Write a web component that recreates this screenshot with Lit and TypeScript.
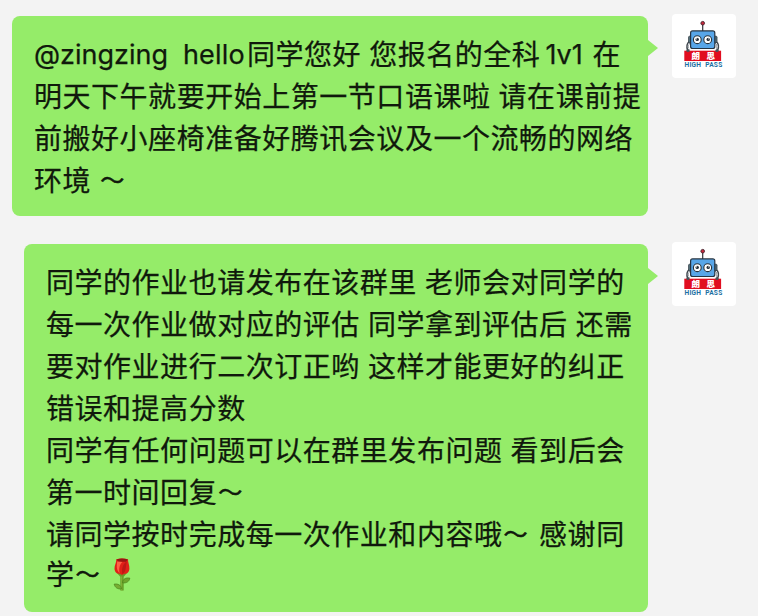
import { LitElement, html, css, svg } from "lit";
import { customElement, property } from "lit/decorators.js";

@customElement("robot-avatar")
export class RobotAvatar extends LitElement {
  static styles = css`
    :host {
      display: block;
      width: 64px;
      height: 64px;
      border-radius: 4px;
      background: #fff;
      overflow: hidden;
    }
    svg {
      display: block;
    }
    .name {
      font: 900 8.5px "Noto Sans CJK SC", sans-serif;
      fill: #fff;
    }
    .brand {
      font: 700 6.6px Roboto, "Liberation Sans", sans-serif;
      fill: #1b6fa3;
    }
  `;

  render() {
    return html`<svg width="64" height="64" viewBox="0 0 64 64">
      <path d="M30.7 10V17" stroke="#33343b" stroke-width="1.2" />
      <circle cx="30.7" cy="9.2" r="1.8" fill="#c8283c" stroke="#45232d" stroke-width=".9" />
      <path d="M17.5 28C15.2 30 15 33 16.2 36.5M43.8 28C46.4 30 46.4 33 45 36.5" fill="none" stroke="#41474e" stroke-width="2.6" />
      <path d="M17.5 28.5C15.9 30.5 15.8 33 16.7 35.5M43.8 28.5C45.7 30.5 45.7 33 44.6 35.5" fill="none" stroke="#e4e9ec" stroke-width="1" />
      <rect x="16.6" y="22.2" width="3" height="6.4" rx="1" fill="#58737c" stroke="#2d3a42" stroke-width=".8" />
      <rect x="42" y="22.2" width="3" height="6.4" rx="1" fill="#58737c" stroke="#2d3a42" stroke-width=".8" />
      <rect x="18.6" y="16.9" width="24.2" height="17.6" rx="2" fill="#58a6e8" stroke="#263442" stroke-width="1.2" />
      ${[25.3, 35.7].map(
        (x, i) => svg`
          <circle cx=${x} cy="25.7" r="3.9" fill="#fff" stroke="#26333d" stroke-width="1.1" />
          <circle cx=${i ? x + 0.5 : x - 0.1} cy="25.4" r="1.7" fill="#26303a" />
          <circle cx=${i ? x + 1.1 : x - 0.7} cy="24.8" r=".6" fill="#fff" />`
      )}
      <rect x="12.3" y="36.7" width="36.8" height="10.3" fill="#e10e20" />
      <ellipse cx="16" cy="36.8" rx="1.7" ry="1.3" fill="#46545c" />
      <ellipse cx="45" cy="36.8" rx="1.7" ry="1.3" fill="#46545c" />
      <text class="name" x="19.5" y="45">朗</text>
      <text class="name" x="34.5" y="45">思</text>
      <text class="brand" x="12.5" y="53.3" textLength="16.5">HIGH</text>
      <text class="brand" x="33.2" y="53.3" textLength="17">PASS</text>
    </svg>`;
  }
}

@customElement("chat-message")
export class ChatMessage extends LitElement {
  @property({ type: Array }) lines: unknown[] = [];
  @property({ type: Number }) width = 0;

  static styles = css`
    :host {
      display: flex;
      justify-content: flex-end;
      align-items: flex-start;
      gap: 24px;
    }
    .bubble {
      position: relative;
      box-sizing: border-box;
      margin-top: 2px;
      padding: 16px 0 16px 22px;
      border-radius: 8px;
      background: #95ec69;
      color: #10190c;
      font: 28px/42px "Noto Sans CJK SC", sans-serif;
      letter-spacing: 0.53px;
      word-spacing: 1.3px;
      -webkit-text-stroke: 0.25px #10190c;
    }
    .bubble::after {
      content: "";
      position: absolute;
      left: 100%;
      top: 24px;
      width: 10px;
      height: 16px;
      background: inherit;
      clip-path: polygon(0 0, 100% 50%, 0 100%);
    }
    .line {
      height: 42px;
      white-space: pre;
    }
    .line:nth-child(8) {
      line-height: 38px;
    }
    .latin {
      font-family: Inter, sans-serif;
      font-size: 27px;
      letter-spacing: 0;
      line-height: 1;
      vertical-align: 1px;
    }
    .mention {
      display: inline-block;
      width: 149px;
    }
    .hello {
      display: inline-block;
      width: 64px;
      letter-spacing: 0.15px;
    }
    .course {
      display: inline-block;
      width: 39px;
      padding-left: 5px;
    }
    .wave {
      display: inline-block;
      width: 28.5px;
      font-size: 24px;
      line-height: 1;
      text-indent: 1px;
      vertical-align: 2px;
      -webkit-text-stroke-width: 0.6px;
    }
    .rose {
      display: inline-block;
      width: 18px;
      height: 34px;
      margin-left: 2px;
      vertical-align: -7px;
    }
  `;

  render() {
    return html`
      <div class="bubble" style="width:${this.width}px">
        ${this.lines.map((line) => html`<div class="line">${line}</div>`)}
      </div>
      <robot-avatar></robot-avatar>
    `;
  }
}

const wave = html`<span class="wave">～</span>`;

const rose = html`<svg class="rose" viewBox="0 0 18 34">
  <path d="M9 15V32.5" stroke="#5c941d" stroke-width="3.2" />
  <path d="M8.8 16V32.5" stroke="#91bd43" stroke-width="1" />
  <path d="M9.5 24.8C10 20.5 13 19.5 16.8 20.1C16.4 23.5 13.4 25.5 9.5 24.8Z" fill="#6fa52b" stroke="#477f18" stroke-width=".7" />
  <path d="M8.5 30.8C8 27 5 25.6 1.2 26.1C1.8 29.5 4.8 31.5 8.5 30.8Z" fill="#78ac32" stroke="#477f18" stroke-width=".7" />
  <path d="M3.3 1.2C7 .2 11.5.3 15 1.3C14.8 4.5 16.7 7 16.4 11C16.1 14.5 13 17 9 17C5 17 1.8 14.5 1.5 11C1.3 7 3.6 4.5 3.3 1.2Z" fill="#e02018" />
  <path d="M3.5 1.4C7 .3 11.5.4 14.8 1.5L13 3.8H5.5Z" fill="#961611" />
  <path d="M4.2 3.6C3.8 8 3 11.5 6.6 15.4C5.7 10.5 6.4 7 9.5 4.1Z" fill="#ff6044" />
  <path d="M14 3.6C10.2 5.5 8.3 10 9.4 16.2C13.7 13.8 12.4 8 14 3.6Z" fill="#bd1915" />
  <path d="M4.6 15.4L7.2 15.9L9 17.1L10.8 15.9L13.4 15.4L11 18.4H7Z" fill="#679c27" />
</svg>`;

const reminder = [
  html`<span class="latin mention">@zingzing</span><span class="latin hello">hello</span>同学您好 您报名的全科<span class="latin course">1v1</span> 在`,
  "明天下午就要开始上第一节口语课啦 请在课前提",
  "前搬好小座椅准备好腾讯会议及一个流畅的网络",
  html`环境 ${wave}`,
];

const homework = [
  "同学的作业也请发布在该群里 老师会对同学的",
  "每一次作业做对应的评估 同学拿到评估后 还需",
  "要对作业进行二次订正哟 这样才能更好的纠正",
  "错误和提高分数",
  "同学有任何问题可以在群里发布问题 看到后会",
  html`第一时间回复${wave}`,
  html`请同学按时完成每一次作业和内容哦${wave} 感谢同`,
  html`学${wave} ${rose}`,
];

@customElement("app-root")
export class AppRoot extends LitElement {
  static styles = css`
    :host {
      display: flex;
      flex-direction: column;
      gap: 26px;
      box-sizing: border-box;
      height: 616px;
      padding: 14px 22px 0 0;
      background: #f3f3f3;
      overflow: hidden;
    }
  `;

  render() {
    return html`
      <chat-message .width=${636} .lines=${reminder}></chat-message>
      <chat-message .width=${624} .lines=${homework}></chat-message>
    `;
  }
}
